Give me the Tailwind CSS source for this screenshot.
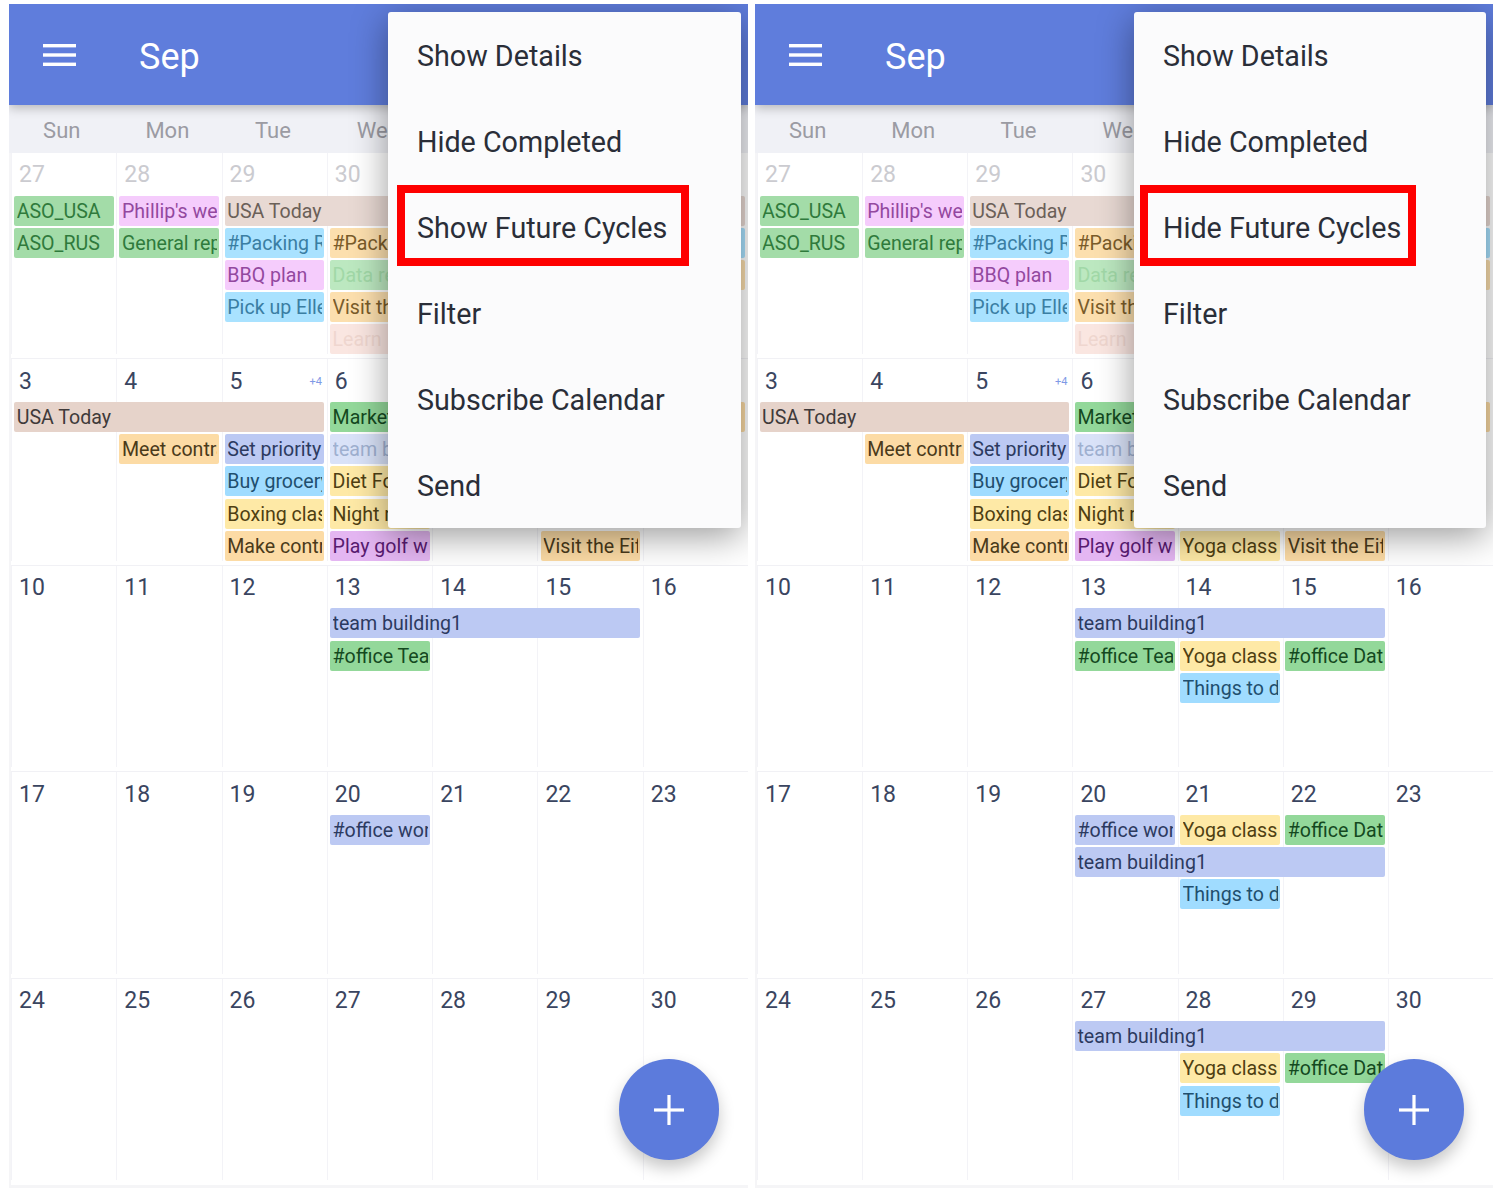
<!DOCTYPE html>
<html lang="en">
<head>
<meta charset="UTF-8">
<title>Calendar menu</title>
<script src="https://cdn.jsdelivr.net/npm/@tailwindcss/browser@4"></script>
</head>
<body class="bg-white font-['Roboto',sans-serif]">
<div class="flex gap-[7px] pl-[9px] pt-[4px]">

<!-- left phone: future cycles hidden -->
<section class="relative h-[1184px] w-[739px] shrink-0 overflow-hidden bg-[#f5f5f7] [&_p]:ml-[3.2px] [&_p]:mr-[2.5px] [&_p]:h-[30px] [&_p]:overflow-clip [&_p]:[overflow-clip-margin:content-box] [&_p]:whitespace-nowrap [&_p]:rounded-[2px] [&_p]:pl-[2.5px] [&_p]:pr-[2px] [&_p]:pt-px [&_p]:text-[19.6px] [&_p]:leading-[30px]">
  <header class="relative z-10 flex h-[101px] items-center gap-[63px] bg-[#5f7ddc] pl-[34px] shadow-[0_3px_10px_rgba(0,0,0,.25)]">
    <svg class="h-[22px] w-[33px]" viewBox="0 0 33 22" fill="#fff"><rect y="0" width="33" height="3.4"/><rect y="9.3" width="33" height="3.4"/><rect y="18.6" width="33" height="3.4"/></svg>
    <h1 class="pt-[5px] text-[36px] text-white">Sep</h1>
  </header>
  <div class="grid h-[48px] grid-cols-7 items-center bg-[#f0f1f6] pt-[3px] text-center text-[22px] text-[#9b9ba3]">
    <span>Sun</span><span>Mon</span><span>Tue</span><span>Wed</span><span>Thu</span><span>Fri</span><span>Sat</span>
  </div>
  <div class="ml-[2px] bg-white">
    <div class="grid h-[206.4px] grid-cols-7 grid-rows-[40.5px_repeat(5,30px)] gap-y-[2.2px] border-b border-[#f1f1f5] text-[23px] text-[#3a4560] [&>div]:row-span-6 [&>div]:row-start-1 [&>div]:border-l [&>div]:border-[#f3f3f7] [&>div]:pl-[7px] [&>div]:pt-[7px] [&>div]:leading-[30px] [&>div]:text-[#cbcbd0]">
      <div class="col-start-1">27</div><div class="col-start-2">28</div><div class="col-start-3">29</div><div class="col-start-4">30</div><div class="col-start-5">31</div><div class="col-start-6">1</div><div class="col-start-7">2</div>
      <p class="col-start-1 row-start-2 bg-[#a3dca8] text-[#2f7a3c]">ASO_USA</p>
      <p class="col-start-1 row-start-3 bg-[#a3dca8] text-[#2f7a3c]">ASO_RUS</p>
      <p class="col-start-2 row-start-2 bg-[#f5ccfc] text-[#93489f]">Phillip's wedding</p>
      <p class="col-start-2 row-start-3 bg-[#a3dca8] text-[#2f7a3c]">General report</p>
      <p class="col-span-5 col-start-3 row-start-2 bg-[#e8d9d3] text-[#6b6058]">USA Today</p>
      <p class="col-start-3 row-start-3 bg-[#a9e2ff] text-[#3a7ea3]">#Packing Rules</p>
      <p class="col-start-3 row-start-4 bg-[#f5ccfc] text-[#93489f]">BBQ plan</p>
      <p class="col-start-3 row-start-5 bg-[#a9e2ff] text-[#3a7ea3]">Pick up Ellen</p>
      <p class="col-start-4 row-start-3 bg-[#fcdfae] text-[#7a5c2a]">#Packing</p>
      <p class="col-start-4 row-start-4 bg-[#bce8c0] text-[#a1d8a7]">Data report</p>
      <p class="col-start-4 row-start-5 bg-[#fcdfae] text-[#7a5c2a]">Visit the</p>
      <p class="col-start-4 row-start-6 bg-[#fae6e1] text-[#efd6cf]">Learn</p>
      <p class="col-start-7 row-start-3 bg-[#a9e2ff] text-[#3a7ea3]">#Packing</p>
      <p class="col-start-7 row-start-4 bg-[#fcdfae] text-[#7a5c2a]">Visit</p>
    </div>
    <div class="grid h-[206.4px] grid-cols-7 grid-rows-[40.5px_repeat(5,30px)] gap-y-[2.2px] border-b border-[#f1f1f5] text-[23px] text-[#3a4560] [&>div]:row-span-6 [&>div]:row-start-1 [&>div]:border-l [&>div]:border-[#f3f3f7] [&>div]:pl-[7px] [&>div]:pt-[8px] [&>div]:leading-[30px]">
      <div class="col-start-1">3</div><div class="col-start-2">4</div><div class="col-start-3 flex justify-between pr-[5px]">5<span class="text-[11px] text-[#7f9ae6]">+4</span></div><div class="col-start-4">6</div><div class="col-start-5">7</div><div class="col-start-6">8</div><div class="col-start-7">9</div>
      <p class="col-span-3 col-start-1 row-start-2 bg-[#e6d3ca] text-[#3f3a3a]">USA Today</p>
      <p class="col-start-4 row-start-2 bg-[#93d89a] text-[#14491f]">Marketing</p>
      <p class="col-start-7 row-start-2 bg-[#fcdba5] text-[#4a3a1a]">Plan</p>
      <p class="col-start-2 row-start-3 bg-[#fcdba5] text-[#4a3a1a]">Meet contract</p>
      <p class="col-start-3 row-start-3 bg-[#bcc9f3] text-[#2c3a60]">Set priority list</p>
      <p class="col-start-3 row-start-4 bg-[#a0dcff] text-[#1f4f6e]">Buy grocery</p>
      <p class="col-start-3 row-start-5 bg-[#fee9a6] text-[#4f3f12]">Boxing class</p>
      <p class="col-start-3 row-start-6 bg-[#fcdba5] text-[#4a3a1a]">Make contract</p>
      <p class="col-start-4 row-start-3 bg-[#d9e2f8] text-[#9fb0d0]">team building</p>
      <p class="col-start-4 row-start-4 bg-[#fee9a6] text-[#4f3f12]">Diet Food</p>
      <p class="col-start-4 row-start-5 bg-[#fee9a6] text-[#4f3f12]">Night run</p>
      <p class="col-start-4 row-start-6 bg-[#e4b6f2] text-[#581a70]">Play golf with</p>
      <p class="col-start-6 row-start-6 bg-[#fcdba5] text-[#4a3a1a]">Visit the Eiffel</p>
    </div>
    <!-- these weeks sit above the menu's shadow, it stops at the row edge -->
    <div class="relative z-30 bg-white">
    <div class="grid h-[206.4px] grid-cols-7 grid-rows-[40.5px_repeat(5,30px)] gap-y-[2.2px] border-b border-[#f1f1f5] text-[23px] text-[#3a4560] [&>div]:row-span-6 [&>div]:row-start-1 [&>div]:border-l [&>div]:border-[#f3f3f7] [&>div]:pl-[7px] [&>div]:pt-[7px] [&>div]:leading-[30px]">
      <div class="col-start-1">10</div><div class="col-start-2">11</div><div class="col-start-3">12</div><div class="col-start-4">13</div><div class="col-start-5">14</div><div class="col-start-6">15</div><div class="col-start-7">16</div>
      <p class="col-span-3 col-start-4 row-start-2 bg-[#bcc9f3] text-[#2c3a60]">team building1</p>
      <p class="col-start-4 row-start-3 bg-[#93d89a] text-[#14491f]">#office Team</p>
    </div>
    <div class="grid h-[206.4px] grid-cols-7 grid-rows-[40.5px_repeat(5,30px)] gap-y-[2.2px] border-b border-[#f1f1f5] text-[23px] text-[#3a4560] [&>div]:row-span-6 [&>div]:row-start-1 [&>div]:border-l [&>div]:border-[#f3f3f7] [&>div]:pl-[7px] [&>div]:pt-[8px] [&>div]:leading-[30px]">
      <div class="col-start-1">17</div><div class="col-start-2">18</div><div class="col-start-3">19</div><div class="col-start-4">20</div><div class="col-start-5">21</div><div class="col-start-6">22</div><div class="col-start-7">23</div>
      <p class="col-start-4 row-start-2 bg-[#bcc9f3] text-[#2c3a60]">#office work</p>
    </div>
    <div class="grid h-[206.4px] grid-cols-7 grid-rows-[40.5px_repeat(5,30px)] gap-y-[2.2px] text-[23px] text-[#3a4560] [&>div]:row-span-6 [&>div]:row-start-1 [&>div]:border-l [&>div]:border-[#f3f3f7] [&>div]:pl-[7px] [&>div]:pt-[7px] [&>div]:leading-[30px]">
      <div class="col-start-1">24</div><div class="col-start-2">25</div><div class="col-start-3">26</div><div class="col-start-4">27</div><div class="col-start-5">28</div><div class="col-start-6">29</div><div class="col-start-7">30</div>
    </div>
    </div>
  </div>

  <div class="absolute right-[7px] top-[8px] z-20 w-[353px] rounded-[3px] bg-[#fbfbfc] text-[28.7px] text-[#2a2e38] shadow-[0_8px_36px_rgba(0,0,0,.4)] [&>div]:relative [&>div]:flex [&>div]:h-[86px] [&>div]:items-center [&>div]:pl-[29px] [&>div]:pt-[3px]">
    <div>Show Details</div>
    <div>Hide Completed</div>
    <div>Show Future Cycles<span class="absolute left-[9px] top-px h-[81px] w-[292px] border-[8px] border-[#fe0000]"></span></div>
    <div>Filter</div>
    <div>Subscribe Calendar</div>
    <div>Send</div>
  </div>

  <button class="absolute left-[610px] top-[1055px] z-40 flex h-[101px] w-[100px] items-center justify-center rounded-full bg-[#5c7bdc] shadow-[0_8px_16px_rgba(0,0,0,.22)]">
    <svg class="h-[30px] w-[30px]" viewBox="0 0 30 30" fill="#fff"><rect x="13.4" width="3.2" height="30"/><rect y="13.4" width="30" height="3.2"/></svg>
  </button>
</section>

<!-- right phone: future cycles shown -->
<section class="relative h-[1184px] w-[738px] shrink-0 overflow-hidden bg-[#f5f5f7] [&_p]:ml-[2.5px] [&_p]:mr-[3px] [&_p]:h-[30px] [&_p]:overflow-clip [&_p]:[overflow-clip-margin:content-box] [&_p]:whitespace-nowrap [&_p]:rounded-[2px] [&_p]:pl-[2.5px] [&_p]:pr-[2px] [&_p]:pt-px [&_p]:text-[19.6px] [&_p]:leading-[30px]">
  <header class="relative z-10 flex h-[101px] items-center gap-[63px] bg-[#5f7ddc] pl-[34px] shadow-[0_3px_10px_rgba(0,0,0,.25)]">
    <svg class="h-[22px] w-[33px]" viewBox="0 0 33 22" fill="#fff"><rect y="0" width="33" height="3.4"/><rect y="9.3" width="33" height="3.4"/><rect y="18.6" width="33" height="3.4"/></svg>
    <h1 class="pt-[5px] text-[36px] text-white">Sep</h1>
  </header>
  <div class="grid h-[48px] grid-cols-7 items-center bg-[#f0f1f6] pt-[3px] text-center text-[22px] text-[#9b9ba3]">
    <span>Sun</span><span>Mon</span><span>Tue</span><span>Wed</span><span>Thu</span><span>Fri</span><span>Sat</span>
  </div>
  <div class="ml-[2px] bg-white">
    <div class="grid h-[206.4px] grid-cols-7 grid-rows-[40.5px_repeat(5,30px)] gap-y-[2.2px] border-b border-[#f1f1f5] text-[23px] text-[#3a4560] [&>div]:row-span-6 [&>div]:row-start-1 [&>div]:border-l [&>div]:border-[#f3f3f7] [&>div]:pl-[7px] [&>div]:pt-[7px] [&>div]:leading-[30px] [&>div]:text-[#cbcbd0]">
      <div class="col-start-1">27</div><div class="col-start-2">28</div><div class="col-start-3">29</div><div class="col-start-4">30</div><div class="col-start-5">31</div><div class="col-start-6">1</div><div class="col-start-7">2</div>
      <p class="col-start-1 row-start-2 bg-[#a3dca8] text-[#2f7a3c]">ASO_USA</p>
      <p class="col-start-1 row-start-3 bg-[#a3dca8] text-[#2f7a3c]">ASO_RUS</p>
      <p class="col-start-2 row-start-2 bg-[#f5ccfc] text-[#93489f]">Phillip's wedding</p>
      <p class="col-start-2 row-start-3 bg-[#a3dca8] text-[#2f7a3c]">General report</p>
      <p class="col-span-5 col-start-3 row-start-2 bg-[#e8d9d3] text-[#6b6058]">USA Today</p>
      <p class="col-start-3 row-start-3 bg-[#a9e2ff] text-[#3a7ea3]">#Packing Rules</p>
      <p class="col-start-3 row-start-4 bg-[#f5ccfc] text-[#93489f]">BBQ plan</p>
      <p class="col-start-3 row-start-5 bg-[#a9e2ff] text-[#3a7ea3]">Pick up Ellen</p>
      <p class="col-start-4 row-start-3 bg-[#fcdfae] text-[#7a5c2a]">#Packing</p>
      <p class="col-start-4 row-start-4 bg-[#bce8c0] text-[#a1d8a7]">Data report</p>
      <p class="col-start-4 row-start-5 bg-[#fcdfae] text-[#7a5c2a]">Visit the</p>
      <p class="col-start-4 row-start-6 bg-[#fae6e1] text-[#efd6cf]">Learn</p>
      <p class="col-start-7 row-start-3 bg-[#a9e2ff] text-[#3a7ea3]">#Packing</p>
      <p class="col-start-7 row-start-4 bg-[#fcdfae] text-[#7a5c2a]">Visit</p>
    </div>
    <div class="grid h-[206.4px] grid-cols-7 grid-rows-[40.5px_repeat(5,30px)] gap-y-[2.2px] border-b border-[#f1f1f5] text-[23px] text-[#3a4560] [&>div]:row-span-6 [&>div]:row-start-1 [&>div]:border-l [&>div]:border-[#f3f3f7] [&>div]:pl-[7px] [&>div]:pt-[8px] [&>div]:leading-[30px]">
      <div class="col-start-1">3</div><div class="col-start-2">4</div><div class="col-start-3 flex justify-between pr-[5px]">5<span class="text-[11px] text-[#7f9ae6]">+4</span></div><div class="col-start-4">6</div><div class="col-start-5">7</div><div class="col-start-6">8</div><div class="col-start-7">9</div>
      <p class="col-span-3 col-start-1 row-start-2 bg-[#e6d3ca] text-[#3f3a3a]">USA Today</p>
      <p class="col-start-4 row-start-2 bg-[#93d89a] text-[#14491f]">Marketing</p>
      <p class="col-start-7 row-start-2 bg-[#fcdba5] text-[#4a3a1a]">Plan</p>
      <p class="col-start-2 row-start-3 bg-[#fcdba5] text-[#4a3a1a]">Meet contract</p>
      <p class="col-start-3 row-start-3 bg-[#bcc9f3] text-[#2c3a60]">Set priority list</p>
      <p class="col-start-3 row-start-4 bg-[#a0dcff] text-[#1f4f6e]">Buy grocery</p>
      <p class="col-start-3 row-start-5 bg-[#fee9a6] text-[#4f3f12]">Boxing class</p>
      <p class="col-start-3 row-start-6 bg-[#fcdba5] text-[#4a3a1a]">Make contract</p>
      <p class="col-start-4 row-start-3 bg-[#d9e2f8] text-[#9fb0d0]">team building</p>
      <p class="col-start-4 row-start-4 bg-[#fee9a6] text-[#4f3f12]">Diet Food</p>
      <p class="col-start-4 row-start-5 bg-[#fee9a6] text-[#4f3f12]">Night run</p>
      <p class="col-start-4 row-start-6 bg-[#e4b6f2] text-[#581a70]">Play golf with</p>
      <p class="col-start-5 row-start-6 bg-[#fee9a6] text-[#4f3f12]">Yoga class</p>
      <p class="col-start-6 row-start-6 bg-[#fcdba5] text-[#4a3a1a]">Visit the Eiffel</p>
    </div>
    <div class="relative z-30 bg-white">
    <div class="grid h-[206.4px] grid-cols-7 grid-rows-[40.5px_repeat(5,30px)] gap-y-[2.2px] border-b border-[#f1f1f5] text-[23px] text-[#3a4560] [&>div]:row-span-6 [&>div]:row-start-1 [&>div]:border-l [&>div]:border-[#f3f3f7] [&>div]:pl-[7px] [&>div]:pt-[7px] [&>div]:leading-[30px]">
      <div class="col-start-1">10</div><div class="col-start-2">11</div><div class="col-start-3">12</div><div class="col-start-4">13</div><div class="col-start-5">14</div><div class="col-start-6">15</div><div class="col-start-7">16</div>
      <p class="col-span-3 col-start-4 row-start-2 bg-[#bcc9f3] text-[#2c3a60]">team building1</p>
      <p class="col-start-4 row-start-3 bg-[#93d89a] text-[#14491f]">#office Team</p>
      <p class="col-start-5 row-start-3 bg-[#fee9a6] text-[#4f3f12]">Yoga class</p>
      <p class="col-start-6 row-start-3 bg-[#93d89a] text-[#14491f]">#office Data</p>
      <p class="col-start-5 row-start-4 bg-[#a0dcff] text-[#1f4f6e]">Things to do</p>
    </div>
    <div class="grid h-[206.4px] grid-cols-7 grid-rows-[40.5px_repeat(5,30px)] gap-y-[2.2px] border-b border-[#f1f1f5] text-[23px] text-[#3a4560] [&>div]:row-span-6 [&>div]:row-start-1 [&>div]:border-l [&>div]:border-[#f3f3f7] [&>div]:pl-[7px] [&>div]:pt-[8px] [&>div]:leading-[30px]">
      <div class="col-start-1">17</div><div class="col-start-2">18</div><div class="col-start-3">19</div><div class="col-start-4">20</div><div class="col-start-5">21</div><div class="col-start-6">22</div><div class="col-start-7">23</div>
      <p class="col-start-4 row-start-2 bg-[#bcc9f3] text-[#2c3a60]">#office work</p>
      <p class="col-start-5 row-start-2 bg-[#fee9a6] text-[#4f3f12]">Yoga class</p>
      <p class="col-start-6 row-start-2 bg-[#93d89a] text-[#14491f]">#office Data</p>
      <p class="col-span-3 col-start-4 row-start-3 bg-[#bcc9f3] text-[#2c3a60]">team building1</p>
      <p class="col-start-5 row-start-4 bg-[#a0dcff] text-[#1f4f6e]">Things to do</p>
    </div>
    <div class="grid h-[206.4px] grid-cols-7 grid-rows-[40.5px_repeat(5,30px)] gap-y-[2.2px] text-[23px] text-[#3a4560] [&>div]:row-span-6 [&>div]:row-start-1 [&>div]:border-l [&>div]:border-[#f3f3f7] [&>div]:pl-[7px] [&>div]:pt-[7px] [&>div]:leading-[30px]">
      <div class="col-start-1">24</div><div class="col-start-2">25</div><div class="col-start-3">26</div><div class="col-start-4">27</div><div class="col-start-5">28</div><div class="col-start-6">29</div><div class="col-start-7">30</div>
      <p class="col-span-3 col-start-4 row-start-2 bg-[#bcc9f3] text-[#2c3a60]">team building1</p>
      <p class="col-start-5 row-start-3 bg-[#fee9a6] text-[#4f3f12]">Yoga class</p>
      <p class="col-start-6 row-start-3 bg-[#93d89a] text-[#14491f]">#office Data</p>
      <p class="col-start-5 row-start-4 bg-[#a0dcff] text-[#1f4f6e]">Things to do</p>
    </div>
    </div>
  </div>

  <div class="absolute right-[7px] top-[8px] z-20 w-[352px] rounded-[3px] bg-[#fbfbfc] text-[28.7px] text-[#2a2e38] shadow-[0_8px_36px_rgba(0,0,0,.4)] [&>div]:relative [&>div]:flex [&>div]:h-[86px] [&>div]:items-center [&>div]:pl-[29px] [&>div]:pt-[3px]">
    <div>Show Details</div>
    <div>Hide Completed</div>
    <div>Hide Future Cycles<span class="absolute left-[6px] top-px h-[81px] w-[276px] border-[8px] border-[#fe0000]"></span></div>
    <div>Filter</div>
    <div>Subscribe Calendar</div>
    <div>Send</div>
  </div>

  <button class="absolute left-[609px] top-[1055px] z-40 flex h-[101px] w-[100px] items-center justify-center rounded-full bg-[#5c7bdc] shadow-[0_8px_16px_rgba(0,0,0,.22)]">
    <svg class="h-[30px] w-[30px]" viewBox="0 0 30 30" fill="#fff"><rect x="13.4" width="3.2" height="30"/><rect y="13.4" width="30" height="3.2"/></svg>
  </button>
</section>

</div>
</body>
</html>
